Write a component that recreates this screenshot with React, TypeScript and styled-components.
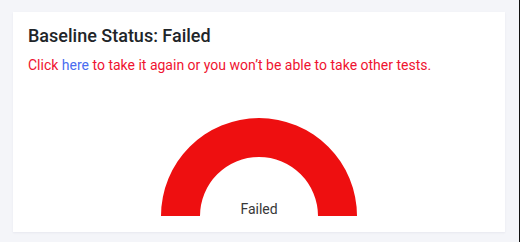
import React from "react";
import styled, { createGlobalStyle } from "styled-components";

const GlobalStyle = createGlobalStyle`
  html, body {
    margin: 0;
    padding: 0;
    background: #f4f5f9;
  }
  body {
    font-family: Roboto, "Liberation Sans", Arial, sans-serif;
  }
`;

const Page = styled.div`
  width: 520px;
  height: 242px;
  box-sizing: border-box;
  padding: 12px 14px 0 13px;
  border-right: 1px solid #111;
`;

const Card = styled.section`
  background: #ffffff;
  box-sizing: border-box;
  width: 492px;
  height: 220px;
  padding: 13px 15px 0 15px;
  display: flex;
  flex-direction: column;
  box-shadow: 0 1px 2px rgba(30, 40, 80, 0.06);
`;

const Title = styled.h2`
  margin: 0;
  font-size: 18px;
  line-height: 21.6px;
  font-weight: 500;
  color: #212529;
`;

const Message = styled.p`
  margin: 8px 0 0 0;
  font-size: 14px;
  line-height: 21px;
  color: #ef1330;
`;

const Link = styled.a`
  color: #4a6cf0;
  text-decoration: none;
  cursor: pointer;
`;

const Gauge = styled.div`
  position: relative;
  align-self: center;
  width: 196px;
  height: 98px;
  margin-top: 42px;
`;

const GaugeLabel = styled.span`
  position: absolute;
  left: 0;
  right: 0;
  bottom: -1px;
  text-align: center;
  font-size: 14px;
  line-height: 16px;
  color: #383838;
`;

export default function App() {
  return (
    <>
      <GlobalStyle />
      <Page>
        <Card>
          <Title>Baseline Status: Failed</Title>
          <Message>
            Click <Link>here</Link> to take it again or you won’t be able to take other tests.
          </Message>
          <Gauge>
            <svg width="196" height="98" viewBox="0 0 196 98">
              <path
                d="M0 98 A98 98 0 0 1 196 98 L157 98 A59 59 0 0 0 39 98 Z"
                fill="#ee0f10"
              />
            </svg>
            <GaugeLabel>Failed</GaugeLabel>
          </Gauge>
        </Card>
      </Page>
    </>
  );
}
